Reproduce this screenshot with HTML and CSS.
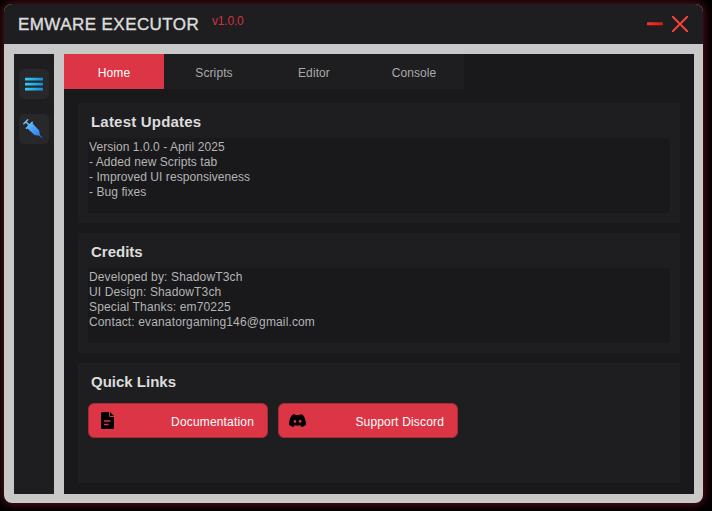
FILE: index.html
```html
<!DOCTYPE html>
<html lang="en">
<head>
<meta charset="utf-8">
<title>EMWARE EXECUTOR</title>
<link rel="stylesheet" href="styles.css">
</head>
<body>
<main class="window">
  <header class="titlebar">
    <h1 class="title">EMWARE EXECUTOR</h1>
    <span class="version">v1.0.0</span>
    <div class="controls">
      <svg width="16" height="16" viewBox="0 0 16 16"><defs><linearGradient id="red"><stop stop-color="#fb3430"/><stop offset="1" stop-color="#dc140f"/></linearGradient></defs><rect y="6.3" width="16" height="3" rx=".8" fill="url(#red)"/></svg>
      <svg width="16" height="16" viewBox="0 0 16 16"><path d="M.8.8 15.2 15.2M15.2.8.8 15.2" stroke="#f44336" stroke-width="2" stroke-linecap="round"/></svg>
    </div>
  </header>
  <div class="body">
    <aside class="sidebar">
      <button class="tool" aria-label="Menu">
        <svg width="18" height="14" viewBox="0 0 18 14"><defs><linearGradient id="cyan"><stop stop-color="#34cdf5"/><stop offset="1" stop-color="#168adb"/></linearGradient></defs><g fill="url(#cyan)"><rect y=".8" width="18" height="2.800" rx=".6"/><rect y="5.800" width="18" height="2.800" rx=".6"/><rect y="10.800" width="18" height="2.800" rx=".6"/></g></svg>
      </button>
      <button class="tool syringe" aria-label="Inject">
        <svg width="20" height="20" viewBox="0 0 20 20"><defs><linearGradient id="blue" x2="1" y2="1"><stop stop-color="#62bdfa"/><stop offset=".6" stop-color="#3b91fb"/><stop offset="1" stop-color="#1b61d5"/></linearGradient></defs><path d="M.8 4.800 4.700.8M2.800 2.700l3 3M3.400 9.200 9.200 3.400" fill="none" stroke="#6cc3f8" stroke-width="1.500" stroke-linecap="round"/><path d="M3.800 8.900 8.900 3.800l7.300 7.700.7 4.200 3 3.600-.3.300-3.700-2.900-4.200-.8z" fill="url(#blue)"/></svg>
      </button>
    </aside>
    <section class="content">
      <nav class="tabs">
        <a class="tab active">Home</a><a class="tab">Scripts</a><a class="tab">Editor</a><a class="tab">Console</a>
      </nav>
      <div class="cards">
        <article class="card">
          <h2 class="heading wide">Latest Updates</h2>
          <div class="text"><p>Version 1.0.0 - April 2025</p><p>- Added new Scripts tab</p><p>- Improved UI responsiveness</p><p>- Bug fixes</p></div>
        </article>
        <article class="card">
          <h2 class="heading">Credits</h2>
          <div class="text credits"><p>Developed by: ShadowT3ch</p><p>UI Design: ShadowT3ch</p><p>Special Thanks: em70225</p><p>Contact: evanatorgaming146@gmail.com</p></div>
        </article>
        <article class="card">
          <h2 class="heading">Quick Links</h2>
          <div class="links">
            <button class="link">
              <svg class="doc" width="13" height="17" viewBox="0 0 13 17"><path d="M1.500 0H8v3.500Q8 5 9.500 5H13v10.500q0 1.500-1.500 1.500h-10Q0 17 0 15.500v-14Q0 0 1.500 0zM9 0l4 4H9z"/><path d="M3 9h6.500M3 12.500h4.500" stroke="#dc3545" stroke-width="1.300"/></svg>
              <span>Documentation</span>
            </button>
            <button class="link discord">
              <svg width="17" height="13" viewBox="0 0 17 13"><path d="M5.800 0 3 1Q0 5 0 10.700 2 12.400 4.600 13l1.100-1.700q2.800.7 5.600 0L12.400 13Q15 12.400 17 10.700 17 5 14 1L11.200 0l-.7 1.200q-2-.3-4 0z"/><ellipse cx="5.900" cy="7.300" rx="1.300" ry="1.500" fill="#dc3545"/><ellipse cx="11.100" cy="7.300" rx="1.300" ry="1.500" fill="#dc3545"/></svg>
              <span>Support Discord</span>
            </button>
          </div>
        </article>
      </div>
    </section>
  </div>
</main>
</body>
</html>
```
FILE: styles.css
```css
* { box-sizing: border-box; }
body {
  margin: 0;
  padding: 4px 9px 8px 4px;
  width: 712px;
  height: 511px;
  overflow: hidden;
  background: #000;
  font-family: "Liberation Sans", sans-serif;
  font-size: 12px;
}
h1, h2, p { margin: 0; }
svg { display: block; }
button { border: 0; font: inherit; }
.window {
  height: 499px;
  border-radius: 8px;
  background: #c8c8c8;
  box-shadow: 0 0 8px 2px #50101a;
  overflow: hidden;
}
.titlebar {
  height: 40px;
  padding: 0 15px 0 14px;
  display: flex;
  background: #1e1e20;
}
.title {
  width: 194px;
  font: 400 17px/41px "Liberation Sans", sans-serif;
  letter-spacing: .43px;
  -webkit-text-stroke: .4px #dcdcdc;
  color: #dcdcdc;
  white-space: nowrap;
}
.version { font-size: 12px; line-height: 34px; letter-spacing: -.2px; color: #cf3341; }
.controls { margin-left: auto; display: flex; gap: 9px; align-items: center; }
.body { height: 459px; padding: 10px 9px 9px 10px; display: flex; gap: 10px; }
.sidebar {
  width: 40px;
  height: 440px;
  padding: 15px 5px;
  display: flex;
  flex-direction: column;
  gap: 15px;
  background: #1e1e20;
}
.tool {
  width: 30px;
  height: 30px;
  padding: 0 1px 0 0;
  border-radius: 5px;
  display: grid;
  place-items: center;
  background: #28282a;
}
.syringe { padding-right: 2px; }
.content { width: 630px; height: 440px; background: #19191b; }
.tabs { display: flex; width: 400px; background: #1e1e20; }
.tab { width: 100px; line-height: 38px; height: 35px; text-align: center; letter-spacing: .1px; color: #aaa; }
.tab.active { background: #dc3545; color: #fff; }
.cards { padding: 14px; display: flex; flex-direction: column; gap: 10px; }
.card { height: 120px; padding: 0 10px; background: #1e1e20; }
.heading {
  height: 35px;
  padding-left: 3px;
  font: 700 15px/38px "Liberation Sans", sans-serif;
  color: #dcdcdc;
}
.heading.wide { letter-spacing: .2px; }
.text {
  height: 75px;
  padding: 2px 1px;
  background: #19191b;
  color: #b4b4b4;
  line-height: 15px;
  letter-spacing: .06px;
}
.credits { letter-spacing: .14px; }
.links { display: flex; gap: 10px; padding-top: 5px; }
.link {
  width: 180px;
  height: 35px;
  padding: 2px 13px 0 12px;
  display: flex;
  align-items: center;
  justify-content: space-between;
  border: 1px solid #a52b37;
  border-radius: 6px;
  background: #dc3545;
  color: #fff;
  letter-spacing: .17px;
}
.link svg { margin-top: -2px; }
.discord { padding-left: 10px; }
```
